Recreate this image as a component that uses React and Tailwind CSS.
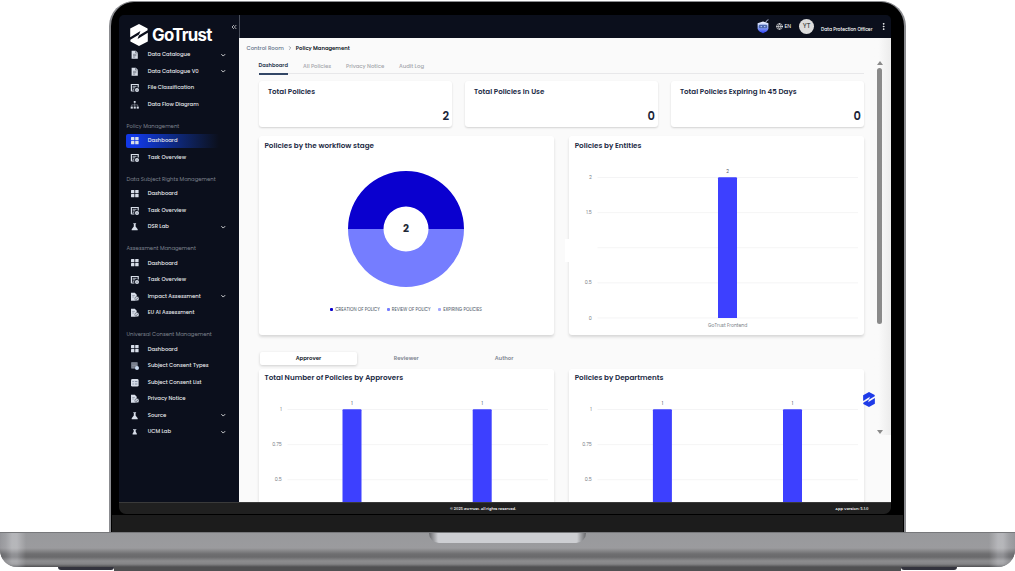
import React from 'react';
import { ChevronDown, ChevronRight, ChevronsLeft, Globe, MoreVertical } from 'lucide-react';

const MENU = [
  {
    items: [
      { label: 'Data Catalogue', icon: 'file', open: true },
      { label: 'Data Catalogue V0', icon: 'file', open: true },
      { label: 'File Classification', icon: 'task' },
      { label: 'Data Flow Diagram', icon: 'flow' },
    ],
  },
  {
    title: 'Policy Management',
    items: [
      { label: 'Dashboard', icon: 'grid', active: true },
      { label: 'Task Overview', icon: 'task' },
    ],
  },
  {
    title: 'Data Subject Rights Management',
    items: [
      { label: 'Dashboard', icon: 'grid' },
      { label: 'Task Overview', icon: 'task' },
      { label: 'DSR Lab', icon: 'lab', open: true },
    ],
  },
  {
    title: 'Assessment Management',
    items: [
      { label: 'Dashboard', icon: 'grid' },
      { label: 'Task Overview', icon: 'task' },
      { label: 'Impact Assessment', icon: 'doc', open: true },
      { label: 'EU AI Assessment', icon: 'doc' },
    ],
  },
  {
    title: 'Universal Consent Management',
    items: [
      { label: 'Dashboard', icon: 'grid' },
      { label: 'Subject Consent Types', icon: 'types' },
      { label: 'Subject Consent List', icon: 'list' },
      { label: 'Privacy Notice', icon: 'doc' },
      { label: 'Source', icon: 'lab', open: true },
      { label: 'UCM Lab', icon: 'labSmall', open: true },
    ],
  },
];

const STATS = [
  { title: 'Total Policies', value: 2 },
  { title: 'Total Policies in Use', value: 0 },
  { title: 'Total Policies Expiring in 45 Days', value: 0 },
];

const ICONS = {
  grid: (
    <g fill="currentColor">
      <rect x="1" y="1" width="3.4" height="3.2" rx=".5" />
      <rect x="5.2" y="1" width="3.4" height="3.2" rx=".5" />
      <rect x="1" y="5" width="3.4" height="3.2" rx=".5" />
      <rect x="5.2" y="5" width="3.4" height="3.2" rx=".5" />
    </g>
  ),
  file: (
    <>
      <path d="M1.6 .8h4.2l2 2v5.9H1.6z" fill="currentColor" />
      <path d="M3 4.3h3.4M3 5.7h3.4M3 7.1h2.2M5.6 1v2h2" stroke="#0b0f1c" strokeWidth=".4" fill="none" />
    </>
  ),
  task: (
    <>
      <path d="M1.4 8.2V1.5h6.8v3M1.4 8h3" fill="none" stroke="currentColor" strokeWidth="1.2" />
      <path d="M2.6 3.3h4M2.6 4.8h2.6M2.6 6.3h1.6" stroke="currentColor" strokeWidth=".8" />
      <circle cx="7" cy="7" r="2" fill="currentColor" />
      <circle cx="7" cy="7" r=".5" fill="#0b0f1c" />
    </>
  ),
  flow: (
    <>
      <path d="M4.7 2.5v2M1.7 6.5v-1.6h6v1.6M4.7 4.5v2" fill="none" stroke="currentColor" strokeWidth=".4" />
      <g fill="currentColor">
        <rect x="3.8" y="1" width="1.8" height="1.8" />
        <rect x=".7" y="6.6" width="2.1" height="2" />
        <rect x="3.7" y="6.6" width="2.1" height="2" />
        <rect x="6.7" y="6.6" width="2.1" height="2" />
      </g>
    </>
  ),
  lab: <path d="M3.3 1.2h2.8v.8h-.5v2.4l2.1 2.9v1h-6v-1l2.1-2.9V2h-.5z" fill="currentColor" />,
  labSmall: <path d="M3 2.2h3.4v.7h-.7v1.9l1.1 1.8v1H2.6v-1l1.1-1.8V2.9H3z" fill="currentColor" />,
  doc: (
    <>
      <path d="M1 .8h3.8l1.9 1.9v6H1z" fill="currentColor" />
      <path d="M2.2 3.5h2.6M2.2 5h2" stroke="#6b7280" strokeWidth=".5" />
      <circle cx="7" cy="6.7" r="2.1" fill="currentColor" stroke="#0b0f1c" strokeWidth=".4" />
      <path d="M6 6.7l.8.7 1.2-1.3" stroke="#0b0f1c" strokeWidth=".5" fill="none" />
    </>
  ),
  types: (
    <>
      <rect x="1" y="1" width="6.8" height="6.8" rx="1" fill="#6b7280" />
      <path d="M2 3h4.8M2 4.6h4.8M2 6.2h2.6" stroke="#b6bcc7" strokeWidth=".4" />
      <circle cx="7" cy="7" r="2" fill="#cbdcf2" />
    </>
  ),
  list: (
    <>
      <rect x="1" y="1" width="7.6" height="7.6" rx="1.4" fill="currentColor" />
      <path d="M2.4 3.6h1.4M4.8 3.6h2.6M2.4 6h1.4M4.8 6h2.6" stroke="#5b6b85" strokeWidth=".7" />
    </>
  ),
};

const LogoMark = ({ className }) => (
  <svg viewBox="0 0 18 22" className={className} fill="currentColor" preserveAspectRatio="none">
    <path d="M9 0l8.6 4.4v1.9L8.8 11.4l1.6-4.3L.2 13.2V4.6z" />
    <path d="M9 22L.4 17.6v-1.9l8.8-5.1-1.6 4.3L17.8 8.8v8.6z" />
  </svg>
);

const MenuItem = ({ label, icon, open, active }) => (
  <div className="h-[16.55px] pl-[7px] flex items-center">
    <div
      className={`h-[13.5px] w-[93px] flex items-center rounded-[2px] ${
        active ? 'bg-linear-to-r from-[#1238e6] from-10% via-[#0e2a86] via-50% to-[#0b0f1c]' : ''
      }`}
    >
      <svg viewBox="0 0 9.5 9.5" className="ml-[3.5px] size-[9.5px] shrink-0 text-[#d8dee9]">
        {ICONS[icon]}
      </svg>
      <span className="ml-[8.7px] text-[5.3px] leading-none font-medium text-[#e5e7eb] whitespace-nowrap">{label}</span>
    </div>
    {open && <ChevronDown className="ml-[1px] size-[6.5px] text-white" strokeWidth={3} />}
  </div>
);

const Sidebar = () => (
  <aside className="w-[120px] shrink-0 bg-[#0b0f1c] overflow-hidden">
    <div className="h-[31.6px] flex items-start">
      <LogoMark className="ml-[11px] mt-[9px] w-[18px] h-[22px] text-white shrink-0" />
      <span className="ml-[4px] mt-[10px] text-[16.8px] leading-[20px] font-bold tracking-[-0.7px] text-white font-['Inter',sans-serif]">GoTrust</span>
      <ChevronsLeft className="ml-auto mr-[1px] mt-[8px] size-[8px] text-white" />
    </div>
    {MENU.map((group, i) => (
      <div key={i}>
        {group.title && (
          <div className="h-[19.8px] pt-[9.3px] pl-[7.5px] text-[5.3px] leading-[8px] text-[#7d828d] whitespace-nowrap">
            {group.title}
          </div>
        )}
        {group.items.map((item) => (
          <MenuItem key={item.label} {...item} />
        ))}
      </div>
    ))}
  </aside>
);

const TopBar = () => (
  <header className="h-[23px] bg-[#0b0f1c] border-l border-[#4a4f5b] flex items-center shrink-0">
    <svg viewBox="0 0 12 15" className="ml-[516.5px] w-[12px] h-[15px]">
      <defs>
        <linearGradient id="shield" x1="0" y1="0" x2="0" y2="1">
          <stop offset="0" stopColor="#f4f7ff" />
          <stop offset=".45" stopColor="#9db5f5" />
          <stop offset="1" stopColor="#2438f0" />
        </linearGradient>
      </defs>
      <path d="M8.6 3.6l1.3-2.2 1.6-.6" stroke="#aab4d0" strokeWidth="1" fill="none" />
      <path d="M.6 4.2l5.4-1.6 5.4 1.6v5.3c0 2-2.8 3.6-5.4 4.8-2.6-1.2-5.4-2.8-5.4-4.8z" fill="url(#shield)" />
      <rect x="1.8" y="5.8" width="8.4" height="3.4" rx="1.2" fill="#4a66ad" />
      <path d="M3.6 7.6h1.4M7 7.6h1.4" stroke="#dbe6ff" strokeWidth=".8" />
    </svg>
    <Globe className="ml-[7.5px] size-[7px] text-white" />
    <span className="ml-[1.5px] text-[5.4px] leading-none text-white">EN</span>
    <div className="ml-[8px] size-[15px] rounded-full bg-[#dcdcdc] flex items-center justify-center text-[6.6px] leading-none font-medium text-[#4b4b4b]">
      YT
    </div>
    <span className="ml-[7px] mt-[8px] text-[4.5px] leading-none font-medium text-white whitespace-nowrap">Data Protection Officer</span>
    <MoreVertical className="ml-auto mr-[3px] size-[9px] text-white" strokeWidth={2.5} />
  </header>
);

const Tabs = () => (
  <div className="ml-[19.5px] w-[605.5px] h-[12px] flex items-start border-b border-[#e8e8ea] text-[5.35px] leading-[8px] font-medium text-[#a3a5aa] whitespace-nowrap">
    <div className="w-[29.5px] h-[12.5px] border-b-2 border-[#334766] text-[#25344d] font-semibold text-[5.2px]">Dashboard</div>
    <div className="ml-[15px] w-[28px]">All Policies</div>
    <div className="ml-[15px] w-[38px]">Privacy Notice</div>
    <div className="ml-[15px]">Audit Log</div>
  </div>
);

const StatCard = ({ title, value }) => (
  <div className="flex-1 h-[46px] bg-white rounded-[3px] shadow-[0_1px_2px_rgba(0,0,0,0.16)] flex flex-col">
    <div className="mt-[6.8px] ml-[9.5px] text-[7.1px] leading-[10px] font-semibold text-[#1c2a44] whitespace-nowrap">{title}</div>
    <div className="mt-[11.7px] mr-[3px] text-right text-[11.5px] leading-[14px] font-semibold text-[#1a2438]">{value}</div>
  </div>
);

const Card = ({ title, className, children }) => (
  <div className={`w-[295.3px] bg-white rounded-[3px] shadow-[0_2px_3px_rgba(0,0,0,0.14)] ${className}`}>
    <div className="pt-[4.6px] pl-[6px] text-[7.2px] leading-[10px] font-semibold text-[#1c2a44] whitespace-nowrap">{title}</div>
    {children}
  </div>
);

const WorkflowDonut = () => (
  <>
    <svg viewBox="0 0 118 118" className="mt-[19px] ml-[88px] size-[118px]">
      <path d="M1 59a58 58 0 0 1 116 0H81.5a22.5 22.5 0 0 0-45 0z" fill="#0a00cf" />
      <path d="M1 59a58 58 0 0 0 116 0H81.5a22.5 22.5 0 0 1-45 0z" fill="#757dff" />
      <text x="59" y="62.3" textAnchor="middle" fontSize="10.5" fontWeight="700" fill="#1f2937">2</text>
    </svg>
    <div className="mt-[18px] pl-[71px] flex items-center text-[4.45px] leading-[8px] text-[#4b5563] whitespace-nowrap">
      <i className="size-[3px] rounded-[1px] bg-[#0a00cf] mr-[2.7px]" />
      <span className="w-[51.5px]">CREATION OF POLICY</span>
      <i className="size-[3px] rounded-[1px] bg-[#757dff] mr-[2px]" />
      <span className="w-[46px]">REVIEW OF POLICY</span>
      <i className="size-[3px] rounded-[1px] bg-[#a3a8ff] mr-[2.5px]" />
      <span>EXPIRING POLICIES</span>
    </div>
  </>
);

// ticks run from the top of the plot down, one every 35.1px
const BarChart = ({ ticks, bars, value, category, height }) => (
  <svg viewBox={`0 0 295 ${height}`} width="295" height={height} className="block">
    {ticks.map((tick, i) => (
      <g key={i}>
        <path d={`M28.5 ${26.5 + i * 35.1}H289`} stroke="#f1f1f3" strokeWidth=".8" />
        <text x="22.8" y={28.1 + i * 35.1} textAnchor="end" fontSize="4.8" fill="#7b7f88">{tick}</text>
      </g>
    ))}
    {bars.map((x) => (
      <g key={x}>
        <path d={`M${x} 166.9V27.3q0-1 1-1h17q1 0 1 1v139.6z`} fill="#3d40ff" />
        <text x={x + 9.5} y="22.2" textAnchor="middle" fontSize="4.6" fill="#4b5563">{value}</text>
      </g>
    ))}
    {category && (
      <text x="158.7" y="176.2" textAnchor="middle" fontSize="4.6" fill="#7b7f88">{category}</text>
    )}
  </svg>
);

const RoleTabs = () => (
  <div className="mt-[17px] ml-[1px] h-[13.5px] w-[293.5px] flex text-[5.4px] leading-[13px] font-semibold text-center text-[#818792]">
    <div className="flex-1 bg-white rounded-[2px] shadow-[0_1px_3px_rgba(0,0,0,0.18)] text-[#111827]">Approver</div>
    <div className="flex-1">Reviewer</div>
    <div className="flex-1">Author</div>
  </div>
);

const Scrollbar = () => (
  <div className="absolute right-0 top-0 h-[397px] w-[18px] bg-linear-to-r from-[#fafafa] from-30% to-[#ececec] flex flex-col items-center pr-[5px]">
    <div className="mt-[23px] border-x-[3px] border-x-transparent border-b-[4px] border-b-[#8a8a8a]" />
    <div className="mt-[2.5px] h-[256.5px] w-[5px] rounded-[2.5px] bg-[#8a8a8a]" />
    <div className="mt-[106px] border-x-[3px] border-x-transparent border-t-[4px] border-t-[#8a8a8a]" />
  </div>
);

const Content = () => (
  <main className="relative h-[464px] bg-[#fafafa] overflow-hidden">
    <div className="pt-[5.5px] pl-[7.5px] flex items-center text-[5.4px] leading-[8px] whitespace-nowrap">
      <span className="text-[#64748b] font-medium">Control Room</span>
      <ChevronRight className="mx-[3px] size-[6px] text-[#475569]" />
      <span className="font-semibold text-[#111827] text-[5.3px]">Policy Management</span>
    </div>
    <div className="mt-[10.7px]"><Tabs /></div>
    <div className="mt-[6.5px] ml-[19.5px] w-[605.5px] flex gap-[12.5px]">
      {STATS.map((s) => <StatCard key={s.title} {...s} />)}
    </div>
    <div className="mt-[9.5px] ml-[19.5px] w-[605.5px] flex justify-between">
      <Card title="Policies by the workflow stage" className="h-[198.5px]">
        <WorkflowDonut />
      </Card>
      <Card title="Policies by Entities" className="h-[198.5px]">
        <BarChart height={183} ticks={['2', '1.5', '', '0.5', '0']} bars={[149]} value="2" category="GoTrust Frontend" />
      </Card>
    </div>
    <div className="ml-[19.5px]"><RoleTabs /></div>
    <div className="mt-[3.5px] ml-[19.5px] w-[605.5px] flex justify-between">
      <Card title="Total Number of Policies by Approvers" className="h-[170px]">
        <BarChart height={150} ticks={['1', '0.75', '0.5']} bars={[83.5, 213.7]} value="1" />
      </Card>
      <Card title="Policies by Departments" className="h-[170px]">
        <BarChart height={150} ticks={['1', '0.75', '0.5']} bars={[83.9, 214]} value="1" />
      </Card>
    </div>
    <div className="absolute left-[326px] top-[201px] w-[5px] h-[23px] bg-white" />
    <Scrollbar />
    <LogoMark className="absolute left-[623.5px] top-[354px] w-[12px] h-[15px] text-[#1f3be8]" />
  </main>
);

const Laptop = ({ children }) => (
  <div className="w-[1015px] h-[571px] bg-white overflow-hidden font-['Poppins','Inter',sans-serif]">
    <div className="mt-px ml-[109px] w-[797px] h-[531px] rounded-t-[25px] bg-black border-t border-x-2 border-[#8b8c90] flex flex-col overflow-hidden">
      <div className="mt-[13px] ml-[8px] w-[772px] h-[499px] rounded-t-[5px] rounded-b-[7px] overflow-hidden flex flex-col shrink-0">
        {children}
      </div>
      <div className="mt-[1px] mx-[1px] flex-1 bg-[#1c1c1c]" />
    </div>
    <div className="h-[35px] rounded-b-[17px] border-t border-[#77787b] bg-[linear-gradient(90deg,#77777a_0px,#96979a_6px,#cfd0d4_12px,#cfd0d4_17px,transparent_26px,transparent_989px,#cfd0d4_998px,#cfd0d4_1003px,#96979a_1009px,#77777a_1015px),linear-gradient(180deg,#98999c_0px,#9b9b9e_15px,#6e6e70_21px,#6a6a6c_24px,#8d8d8f_28px,#858587_31px,#505052_34px)] [background-blend-mode:soft-light,normal] flex justify-center">
      <div className="h-[10px] w-[157px] rounded-b-[10px] bg-[linear-gradient(90deg,#66676a_0px,#cdced2_9px,#cdced2_148px,#66676a_157px)]" />
    </div>
    <div className="h-[4px] flex justify-center">
      <div className="w-[56px] h-[3px] rounded-b-[8px] bg-[#33333d]" />
      <div className="w-[787px] h-[4px] bg-[#505052]" />
      <div className="w-[56px] h-[3px] rounded-b-[8px] bg-[#33333d]" />
    </div>
  </div>
);

const App = () => (
  <Laptop>
    <div className="flex h-[487px] shrink-0">
      <Sidebar />
      <div className="flex-1 flex flex-col">
        <TopBar />
        <Content />
      </div>
    </div>
    <footer className="flex-1 bg-[#202020] border-t border-[#3a3a3a] flex items-center text-[3.75px] leading-none font-semibold text-[#e5e5e5] whitespace-nowrap">
      <span className="ml-[331px]">© 2025 GoTrust. All rights reserved.</span>
      <span className="ml-auto mr-[22.5px]">App Version: 5.1.0</span>
    </footer>
  </Laptop>
);

export default App;
